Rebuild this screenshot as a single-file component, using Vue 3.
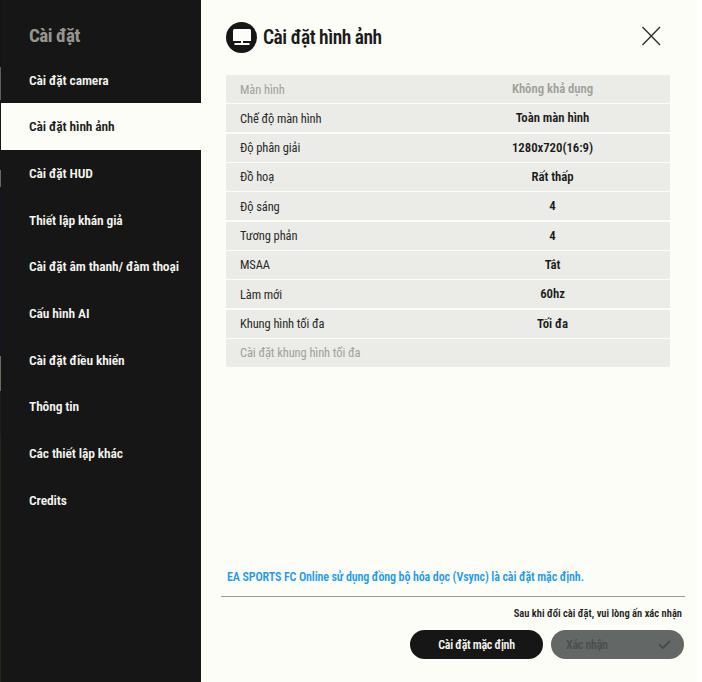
<script setup>
const menu = [
  { label: 'Cài đặt camera' },
  { label: 'Cài đặt hình ảnh', active: true },
  { label: 'Cài đặt HUD' },
  { label: 'Thiết lập khán giả' },
  { label: 'Cài đặt âm thanh/ đàm thoại' },
  { label: 'Cấu hình AI' },
  { label: 'Cài đặt điều khiển' },
  { label: 'Thông tin' },
  { label: 'Các thiết lập khác' },
  { label: 'Credits' }
]
const rows = [
  { name: 'Màn hình', value: 'Không khả dụng', off: true },
  { name: 'Chế độ màn hình', value: 'Toàn màn hình' },
  { name: 'Độ phân giải', value: '1280x720(16:9)' },
  { name: 'Đồ hoạ', value: 'Rất thấp' },
  { name: 'Độ sáng', value: '4' },
  { name: 'Tương phản', value: '4' },
  { name: 'MSAA', value: 'Tắt' },
  { name: 'Làm mới', value: '60hz' },
  { name: 'Khung hình tối đa', value: 'Tối đa' },
  { name: 'Cài đặt khung hình tối đa', value: '', off: true }
]
</script>

<template>
  <div class="page">
    <div class="strip"></div>
    <aside class="side">
      <div class="side-title">Cài đặt</div>
      <ul class="menu">
        <li v-for="m in menu" :key="m.label" class="menu-item" :class="{ active: m.active }">{{ m.label }}</li>
      </ul>
    </aside>
    <main class="main">
      <header class="head">
        <div class="title-wrap">
          <span class="badge">
            <svg width="20" height="19" viewBox="0 0 20 19">
              <path d="M1 2.500A1.500 1.500 0 0 1 2.500 1h15A1.500 1.500 0 0 1 19 2.500V13H1Z" fill="#fcfdf7" />
              <rect x="2.500" y="15" width="15" height="2" fill="#fcfdf7" />
              <rect x="9" y="13" width="2" height="2" fill="#fcfdf7" />
            </svg>
          </span>
          <h1 class="title">Cài đặt hình ảnh</h1>
        </div>
        <svg class="close" width="20" height="20" viewBox="0 0 20 20">
          <path d="M1.500 1L19 19M19 1L1.500 19" stroke="#2a2a2a" stroke-width="1.300" fill="none" />
        </svg>
      </header>
      <div class="table">
        <div v-for="r in rows" :key="r.name" class="row" :class="{ off: r.off }">
          <span class="row-name">{{ r.name }}</span>
          <span class="row-value">{{ r.value }}</span>
        </div>
      </div>
      <footer class="foot">
        <p class="note">EA SPORTS FC Online sử dụng đồng bộ hóa dọc (Vsync) là cài đặt mặc định.</p>
        <div class="rule"></div>
        <p class="hint">Sau khi đổi cài đặt, vui lòng ấn xác nhận</p>
        <div class="actions">
          <button class="btn dark">Cài đặt mặc định</button>
          <button class="btn muted">
            <span>Xác nhận</span>
            <svg width="13" height="10" viewBox="0 0 13 10">
              <path d="M1 4.500L4.800 8L12 1" stroke="#474b4b" stroke-width="2" fill="none" />
            </svg>
          </button>
        </div>
      </footer>
    </main>
  </div>
</template>

<style scoped>
.page {
  display: flex;
  width: 702px;
  height: 682px;
  overflow: hidden;
  background: #fff;
  font-family: "Roboto", "Liberation Sans", sans-serif;
  font-stretch: 80%;
}
.strip {
  width: 1px;
  flex: none;
  background: linear-gradient(180deg, #10141a 0 67px, #5f5e5c 67px 100px, #14161c 100px 170px, #6a6660 170px 187px, #12142c 187px 356px, #6e6a58 356px 391px, #1a1f22 391px 435px, #1d2a18 435px 682px);
}
.side {
  width: 200px;
  flex: none;
  background: #161616;
  color: #f4f4ee;
}
.side-title {
  height: 56.500px;
  padding: 24px 0 0 28px;
  box-sizing: border-box;
  font-size: 19px;
  line-height: 24px;
  font-weight: 700;
  letter-spacing: -0.5px;
  color: #96968f;
}
.menu {
  list-style: none;
  margin: 0;
  padding: 0;
}
.menu-item {
  height: 46.67px;
  padding-left: 28px;
  display: flex;
  align-items: center;
  font-size: 13.500px;
  font-weight: 600;
  letter-spacing: -0.13px;
}
.menu-item.active {
  background: #fcfdf7;
  color: #1b1b1b;
}
.main {
  flex: 1;
  display: flex;
  flex-direction: column;
  background: #fcfdf7;
  padding: 0 12px 23px 20px;
  margin-right: 5px;
  box-sizing: border-box;
  min-width: 0;
  color: #1b1b1b;
}
.head {
  height: 75px;
  flex: none;
  padding: 22px 24px 0 5px;
  box-sizing: border-box;
  display: flex;
  justify-content: space-between;
  align-items: flex-start;
}
.title-wrap {
  display: flex;
  align-items: center;
  gap: 6px;
}
.badge {
  width: 31px;
  height: 31px;
  border-radius: 50%;
  background: #161616;
  display: flex;
  align-items: center;
  justify-content: center;
}
.title {
  margin: 0;
  font-size: 19.500px;
  font-weight: 600;
  letter-spacing: -0.5px;
}
.close {
  margin: 4px 0 0;
}
.table {
  margin: 0 15px 0 5px;
  display: flex;
  flex-direction: column;
  gap: 1.330px;
}
.row {
  height: 28px;
  background: #ebece7;
  display: grid;
  grid-template-columns: 1fr 1fr;
  align-items: center;
  padding-left: 14px;
  font-size: 12.500px;
}
.row-name {
  letter-spacing: -0.1px;
  color: #2a2a2a;
}
.row-value {
  text-align: center;
  font-size: 12.800px;
  font-weight: 600;
  letter-spacing: -0.05px;
  margin-left: -3px;
  padding-right: 17px;
  margin-top: -1px;
}
.row.off .row-name,
.row.off .row-value {
  color: #a0a19c;
}
.foot {
  margin-top: auto;
}
.note {
  margin: 0 0 11px 6px;
  font-size: 12px;
  line-height: 16px;
  font-weight: 600;
  letter-spacing: -0.11px;
  color: #1f9bf5;
}
.rule {
  height: 1px;
  background: #9a9a96;
}
.hint {
  margin: 10px 3px 9px 0;
  text-align: right;
  font-size: 10.500px;
  line-height: 14px;
  font-weight: 600;
}
.actions {
  display: flex;
  justify-content: flex-end;
  gap: 8px;
  margin-right: 1px;
}
.btn {
  width: 133px;
  height: 29px;
  border: 0;
  border-radius: 15px;
  font-family: inherit;
  font-stretch: inherit;
  font-size: 12px;
  font-weight: 600;
  letter-spacing: -0.3px;
  padding: 0;
}
.btn.dark {
  background: #161616;
  color: #f4f4ee;
}
.btn.muted {
  background: #636866;
  color: #4a4e4e;
  display: flex;
  align-items: center;
  justify-content: space-between;
  padding: 0 13px 0 15px;
}
</style>
